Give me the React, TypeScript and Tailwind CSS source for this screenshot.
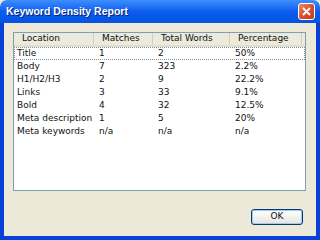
// Keyword Density Report — XP-style dialog with a list view and an OK button.
const ROWS: [string, string, string, string][] = [
  ["Title", "1", "2", "50%"],
  ["Body", "7", "323", "2.2%"],
  ["H1/H2/H3", "2", "9", "22.2%"],
  ["Links", "3", "33", "9.1%"],
  ["Bold", "4", "32", "12.5%"],
  ["Meta description", "1", "5", "20%"],
  ["Meta keywords", "n/a", "n/a", "n/a"],
];

// column widths in px: Location / Matches / Total Words / Percentage
const COLS = ["w-[80px]", "w-[59px]", "w-[77px]", "w-[72px]"];
const HEADERS = ["Location", "Matches", "Total Words", "Percentage"];

export default function App() {
  return (
    <div className="flex h-[240px] w-[320px] flex-col bg-[#ece9d8] font-['DejaVu_Sans',sans-serif] text-[9px] text-[#111]">
      <TitleBar />
      <div className="flex flex-1 flex-col border-x-4 border-b-4 border-[#0841d6] bg-[#ece9d8] pl-[9px] pr-[10px] pt-[9px]">
        <ListView />
        <div className="mt-[18px] flex justify-end pr-[3px]">
          <button className="flex h-[16px] w-[52px] items-center justify-center rounded-[3px] border border-[#003c74] bg-gradient-to-b from-white to-[#e6e5dc] shadow-[inset_0_0_0_1px_#a8c6f5] text-[9px]">
            OK
          </button>
        </div>
      </div>
    </div>
  );
}

function TitleBar() {
  return (
    <div className="flex h-[23px] items-center justify-between rounded-t-[7px] bg-gradient-to-b from-[#3d8eff] via-[#0a5ded] to-[#0652e0] pl-[6px] pr-[5px]">
      <span className="font-['Liberation_Sans',sans-serif] text-[10.5px] font-bold text-white [text-shadow:1px_1px_0_#0a1e7a]">
        Keyword Density Report
      </span>
      <div className="flex h-[17px] w-[17px] items-center justify-center rounded-[3px] border border-white bg-gradient-to-br from-[#ea8a6c] via-[#d9512e] to-[#c03a18]">
        <svg width="9" height="9" viewBox="0 0 9 9">
          <path d="M1 1 L8 8 M8 1 L1 8" stroke="white" strokeWidth="1.8" />
        </svg>
      </div>
    </div>
  );
}

function ListView() {
  return (
    <div className="flex h-[159px] w-[293px] flex-col border border-[#7f9db9] bg-white">
      <div className="flex h-[14px] border-b-2 border-[#e2decd] bg-[#ebeadb]">
        {HEADERS.map((h, i) => (
          <div
            key={h}
            className={`${COLS[i]} flex items-center border-r border-[#d4d0c0] pl-[8px]`}
          >
            {h}
          </div>
        ))}
      </div>
      {ROWS.map((row, r) => (
        <div
          key={row[0]}
          className={`flex h-[13px] items-center ${r === 0 ? "border border-dotted border-[#7f8fa8]" : "border border-transparent"}`}
        >
          {row.map((cell, i) => (
            <div key={i} className={`${COLS[i]} ${i === 0 ? "pl-[2px]" : "pl-[4px]"} whitespace-nowrap`}>
              {cell}
            </div>
          ))}
        </div>
      ))}
    </div>
  );
}
